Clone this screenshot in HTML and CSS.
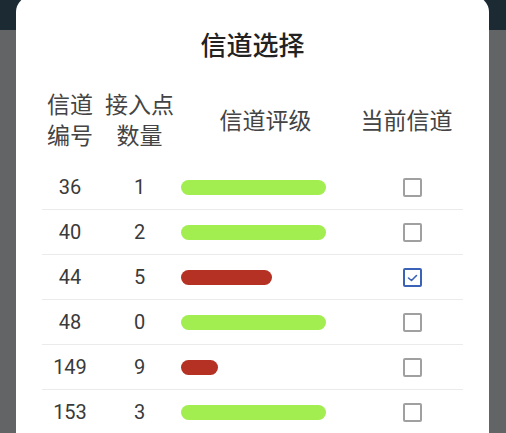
FILE: index.html
```html
<!DOCTYPE html>
<html lang="zh-CN">
<head>
<meta charset="utf-8">
<title>信道选择</title>
<link rel="stylesheet" href="styles.css">
</head>
<body>
<div class="dialog">
  <h1 class="title">信道选择</h1>
  <div class="grid head">
    <div class="hcell">信道<br>编号</div>
    <div class="hcell">接入点<br>数量</div>
    <div class="hcell">信道评级</div>
    <div class="hcell">当前信道</div>
  </div>
  <div class="rows">
    <div class="grid row">
      <div class="num">36</div><div class="num">1</div>
      <div class="barcell"><span class="bar good" style="width:145px"></span></div>
      <div class="chkcell"><span class="chk"></span></div>
    </div>
    <div class="grid row">
      <div class="num">40</div><div class="num">2</div>
      <div class="barcell"><span class="bar good" style="width:145px"></span></div>
      <div class="chkcell"><span class="chk"></span></div>
    </div>
    <div class="grid row">
      <div class="num">44</div><div class="num">5</div>
      <div class="barcell"><span class="bar bad" style="width:91px"></span></div>
      <div class="chkcell"><span class="chk on"><svg viewBox="0 0 19 19" width="19" height="19"><polyline points="5.5,10 8.5,12.5 13.5,7.5" fill="none" stroke="#3a63b8" stroke-width="1.6" stroke-linecap="round" stroke-linejoin="round"/></svg></span></div>
    </div>
    <div class="grid row">
      <div class="num">48</div><div class="num">0</div>
      <div class="barcell"><span class="bar good" style="width:145px"></span></div>
      <div class="chkcell"><span class="chk"></span></div>
    </div>
    <div class="grid row">
      <div class="num">149</div><div class="num">9</div>
      <div class="barcell"><span class="bar bad" style="width:37px"></span></div>
      <div class="chkcell"><span class="chk"></span></div>
    </div>
    <div class="grid row">
      <div class="num">153</div><div class="num">3</div>
      <div class="barcell"><span class="bar good" style="width:145px"></span></div>
      <div class="chkcell"><span class="chk"></span></div>
    </div>
  </div>
</div>
</body>
</html>
```

FILE: styles.css
```css
html, body {
  margin: 0;
  padding: 0;
}
body {
  height: 433px;
  overflow: hidden;
  background: linear-gradient(#1c2b33 0, #1c2b33 30px, #636465 30px, #636465 100%);
  font-family: Roboto, "Noto Sans CJK SC", sans-serif;
  color: #333;
}
.dialog {
  margin: -4px 17px 0 16px;
  background: #fff;
  border-radius: 16px;
  padding: 30px 26px 0;
  min-height: 460px;
}
.title {
  margin: 0;
  font-family: "Noto Sans CJK SC", sans-serif;
  font-size: 26px;
  line-height: 36px;
  font-weight: 500;
  text-align: center;
  color: #222;
}
.grid {
  display: grid;
  grid-template-columns: 56px 83px 169px 113px;
  align-items: center;
}
.head {
  padding-top: 26px;
  margin-bottom: 15px;
}
.hcell {
  font-family: "Noto Sans CJK SC", sans-serif;
  font-size: 23px;
  line-height: 31px;
  text-align: center;
  color: #444;
  white-space: nowrap;
}
.row {
  height: 44px;
  border-bottom: 1px solid #ebebeb;
}
.num {
  text-align: center;
  font-size: 20px;
  color: #3a3a3a;
}
.barcell {
  display: flex;
  align-items: center;
}
.bar {
  display: block;
  height: 15px;
  border-radius: 8px;
}
.bar.good { background: #a2ee50; }
.bar.bad { background: #b53123; }
.chkcell {
  display: flex;
  justify-content: center;
  padding-left: 11px;
}
.chk {
  box-sizing: border-box;
  width: 19px;
  height: 19px;
  border: 2px solid #a0a0a0;
  border-radius: 2px;
  position: relative;
}
.chk.on {
  border-color: #3a63b8;
}
.chk svg {
  position: absolute;
  left: -2px;
  top: -2px;
}
```
